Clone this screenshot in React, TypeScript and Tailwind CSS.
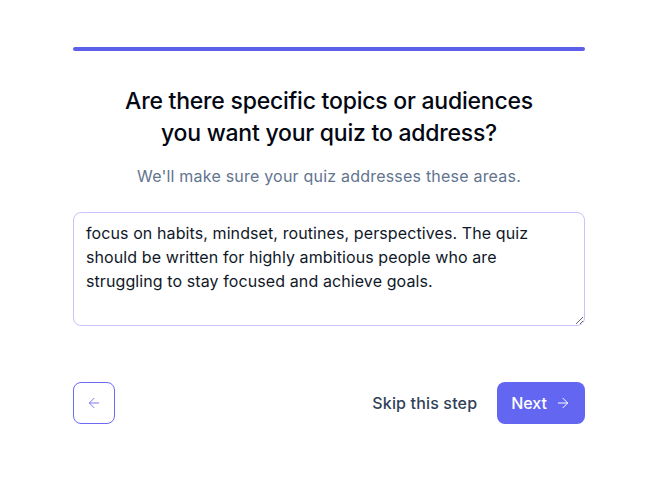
import React, { useState } from "react";
import { ArrowLeft, ArrowRight } from "lucide-react";

const App = () => {
  const [text, setText] = useState(
    "focus on habits, mindset, routines, perspectives. The quiz should be written for highly ambitious people who are struggling to stay focused and achieve goals."
  );

  return (
    <div
      className="min-h-screen bg-white"
      style={{ fontFamily: "Inter, 'Noto Sans', sans-serif" }}
    >
      <div className="ml-[73px] w-[512px] pt-[47px]">
        <div className="h-1 w-full rounded-full bg-[#5b5fe9]" />

        <h1 className="mt-[34px] text-center text-[23px] font-medium leading-8 tracking-[-0.01em] text-gray-950">
          Are there specific topics or audiences
          <br />
          you want your quiz to address?
        </h1>
        <p className="mt-[15px] text-center text-base leading-6 tracking-[0.013em] text-slate-500">
          We'll make sure your quiz addresses these areas.
        </p>

        <textarea
          value={text}
          onChange={(e) => setText(e.target.value)}
          rows={4}
          className="mt-6 block h-[114px] w-full rounded-lg border border-[#c7c2f9] py-2 pl-3 pr-6 text-base leading-6 tracking-[0.006em] text-gray-900 outline-none"
        />

        <div className="mt-14 flex items-center justify-between">
          <button className="flex h-[42px] w-[42px] items-center justify-center rounded-lg border border-[#6d6af5] text-[#7c7cf6]">
            <ArrowLeft size={16} strokeWidth={1.5} />
          </button>
          <div className="flex items-center gap-5">
            <button className="text-base font-medium tracking-[0.01em] text-slate-700">
              Skip this step
            </button>
            <button className="flex h-[42px] items-center gap-2 rounded-lg bg-[#6366f1] px-[14px] text-base font-medium text-white">
              Next
              <ArrowRight size={16} strokeWidth={1.5} />
            </button>
          </div>
        </div>
      </div>
    </div>
  );
};

export default App;
